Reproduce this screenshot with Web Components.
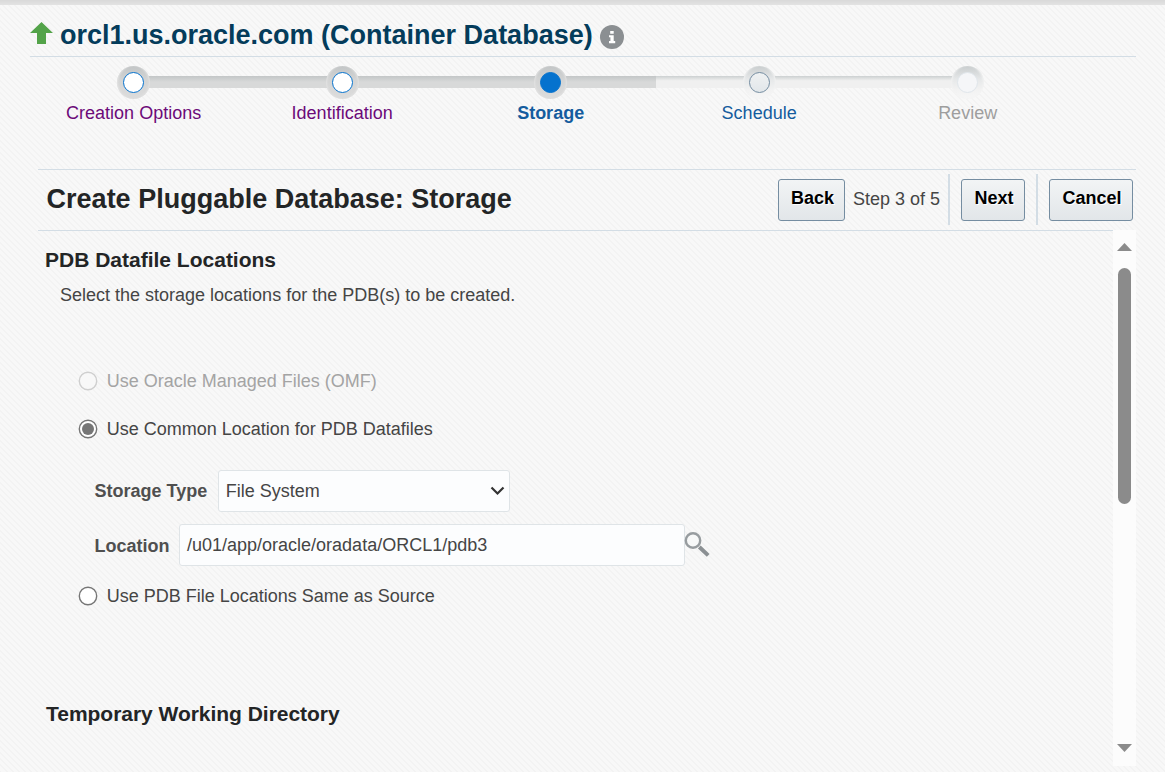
<!DOCTYPE html>
<html lang="en"><head><meta charset="utf-8"><title>Create Pluggable Database: Storage</title>
<style>html,body{margin:0;height:100%;overflow:hidden}body{font:18px/20px "Liberation Sans",Arial,sans-serif;color:#454545;background:#f6f6f6}</style></head>
<body>
<em-page></em-page>
<script>
const define=(name,html,setup)=>customElements.define(name,class extends HTMLElement{
  connectedCallback(){
    if(this.shadowRoot)return;
    const t=document.createElement('template');
    t.innerHTML='<style>*{box-sizing:border-box}</style>'+html;
    this.attachShadow({mode:'open'}).append(t.content.cloneNode(true));
    if(setup)setup(this,this.shadowRoot);
  }});

define('em-header',`<style>
:host{display:flex;box-sizing:border-box;height:52px;margin:0 29px 0 30px;border-bottom:1px solid #d3dde5;align-items:flex-start;color:#043c5b}
h1{font-size:27px;line-height:32px;margin:14px 0 0 7px;font-weight:bold;white-space:nowrap}
.up{margin-top:17px}.info{margin:20px 0 0 7px}</style>
<svg class="up" width="23" height="22" viewBox="0 0 23 22"><path d="M11.5 0L23 11H16V22H7V11H0Z" fill="#53a349"/></svg>
<h1><slot></slot></h1>
<svg class="info" width="24" height="24" viewBox="0 0 24 24"><circle cx="12" cy="12" r="12" fill="#8b8f92"/><path d="M10.2 6h3.5v2.8h-3.5zM9 10.2h4.7v5.8H15.2v2.2H9V16h1.4v-3.7H9z" fill="#fff"/></svg>`);

define('em-step',`<style>
:host{display:flex;flex-direction:column;align-items:center;width:208.5px;flex:none;position:relative;white-space:nowrap}
.ring{width:33px;height:33px;border-radius:50%;padding:6px;background:linear-gradient(#c2c5c6,#d4d5d5 45%,#dcdcdc);position:relative;z-index:1;box-shadow:inset 2px 0 2px -1px #e4e4e4,inset -2px 0 2px -1px #e4e4e4}
.dot{width:21px;height:21px;border-radius:50%;border:1px solid #0572ce;background:#fff}
.label{margin-top:4px;color:#6c0a79}
:host([state=current]) .dot{background:#0572ce}
:host([state=current]) .label{font-weight:bold;color:#145c9e}
:host([state=next]) .ring,:host([state=off]) .ring{background:linear-gradient(#c9cdce,#e6e8e9 40%,#f3f3f3 75%,#f6f6f6);box-shadow:inset 2px 0 2px -1px #f3f3f3,inset -2px 0 2px -1px #f3f3f3}
:host([state=next]) .dot{border-color:#758da1;background:linear-gradient(#eff1f2,#e2e7ea)}
:host([state=next]) .label{color:#145c9e}
:host([state=off]) .dot{border-color:#e0e6eb;background:#f5f6f8}
:host([state=off]) .label{color:#9e9e9e}
</style><div class="ring"><div class="dot"></div></div><div class="label"><slot></slot></div>`);

define('em-train',`<style>
:host{display:flex;position:relative;margin:9px 0 0 29.4px;height:103px}
.rail{position:absolute;left:103.6px;top:10px;width:834px;height:12px;background:linear-gradient(#ccd0d1,#dfe1e1 20%,#f0f0f0 40%)}
.done{width:523px;height:12px;background:linear-gradient(#c3c6c7,#d8d9d9 50%)}
</style><div class="rail"><div class="done"></div></div><slot></slot>`);

define('em-button',`<style>
:host{display:block;flex:none}
button{display:block;font:bold 18px/20px "Liberation Sans",Arial,sans-serif;color:#000;text-shadow:1px 1px 0 #fff;height:42px;width:100%;padding:0 0 4px 2px;border:1px solid #758da1;border-radius:3px;background:linear-gradient(#f2f4f5,#e2e6e9)}
</style><button><slot></slot></button>`);

define('em-toolbar',`<style>
:host{display:flex;align-items:center;height:62px;margin:0 29px 0 38px;border-top:1px solid #d3dde5;border-bottom:1px solid #d3dde5}
h2{margin:0 auto 2px 8.6px;font-size:27px;line-height:32px;color:#232526;white-space:nowrap}
i{width:2px;height:51px;margin-bottom:2px;background:#d3dde5}
.back{width:67px}.step{margin:0 8px 2px;white-space:nowrap;width:87px}.next{width:64px;margin:0 11px}.cancel{width:84px;margin:0 3px 0 11px}
</style><h2><slot></slot></h2><em-button class="back">Back</em-button><span class="step">Step 3 of 5</span><i></i><em-button class="next">Next</em-button><i></i><em-button class="cancel">Cancel</em-button>`);

define('em-radio',`<style>
:host{display:flex;align-items:center;gap:9px;height:20px;white-space:nowrap}
svg{flex:none}:host([disabled]){color:#a4a4a4}
.in{display:none}:host([checked]) .in{display:block}
:host([disabled]) .out{stroke:#cfcfcf;fill:#f8f8f8}
</style><svg width="20" height="20" viewBox="0 0 20 20"><circle class="out" cx="10" cy="10" r="8.7" fill="#fff" stroke="#767676" stroke-width="1.4"/><circle class="in" cx="10" cy="10" r="6" fill="#767676"/></svg><span><slot></slot></span>`);

define('em-field',`<style>
:host{display:flex;align-items:center;height:42px;white-space:nowrap}
b{color:#4f4f4f;position:relative;top:var(--drop,0)}
.box{display:flex;align-items:center;justify-content:space-between;height:42px;border:1px solid #dfe4e7;border-radius:3px;background:#fcfdfe;padding:0 4px 0 7px;margin-left:var(--gap,10px);width:var(--w)}
</style><b></b><div class="box"><slot></slot><slot name="icon"></slot></div><slot name="after"></slot>`,(h,r)=>{r.querySelector('b').textContent=h.getAttribute('label')});

define('em-scrollbar',`<style>
:host{display:flex;flex-direction:column;align-items:center;width:23px;height:536px;background:#fcfcfc;flex:none;margin-top:-1px}
.thumb{width:13px;height:236px;border-radius:7px;background:#8b8b8b;margin:17px 0 auto}
svg{margin-top:13px;display:block}.down{margin:0 0 14px}
</style><svg width="15" height="8"><path d="M0 8L7.5 0L15 8Z" fill="#8b8b8b"/></svg><div class="thumb"></div><svg class="down" width="15" height="8"><path d="M0 0L7.5 8L15 0Z" fill="#8b8b8b"/></svg>`);

define('em-content',`<style>
:host{display:flex;margin:0 29px 0 38px;height:540px}
main{flex:1}
h3{margin:17px 0 0 7px;font-size:21px;line-height:24px;color:#232526}
p{margin:13px 0 0 22px}
.r1{margin:66px 0 0 39.7px}.r2{margin:28px 0 0 39.7px}.r3{margin:20px 0 0 39.7px}
.f1{margin:31px 0 0 56.5px;--w:292px;--gap:10.5px}
.f2{margin:12px 0 0 56.5px;--w:506px;--gap:9.5px;--drop:1px}
.lens{margin:0 0 1px -1px}
h3.tmp{margin:96px 0 0 8px;letter-spacing:-.03px}
</style><main>
<h3>PDB Datafile Locations</h3>
<p>Select the storage locations for the PDB(s) to be created.</p>
<em-radio class="r1" disabled>Use Oracle Managed Files (OMF)</em-radio>
<em-radio class="r2" checked>Use Common Location for PDB Datafiles</em-radio>
<em-field class="f1" label="Storage Type">File System<svg slot="icon" width="15" height="10" viewBox="0 0 15 10"><path d="M1.5 1.5L7.5 7.5L13.5 1.5" fill="none" stroke="#333" stroke-width="2.2"/></svg></em-field>
<em-field class="f2" label="Location">/u01/app/oracle/oradata/ORCL1/pdb3<svg class="lens" slot="after" width="26" height="25" viewBox="0 0 26 25"><circle cx="9" cy="8.5" r="7.2" fill="#f7f8f8" stroke="#979c9f" stroke-width="2.4"/><path d="M15.3 15L24.2 23.4" stroke="#8b9093" stroke-width="4"/></svg></em-field>
<em-radio class="r3">Use PDB File Locations Same as Source</em-radio>
<h3 class="tmp">Temporary Working Directory</h3>
</main><em-scrollbar></em-scrollbar>`);

define('em-page',`<style>
:host{display:block;height:100vh;background:repeating-linear-gradient(45deg,#f3f3f3 0 1.414px,#f8f8f8 1.414px 4.243px)}
.top{height:5px;background:linear-gradient(#d9d9d9,#e3e3e3)}
</style><div class="top"></div>
<em-header>orcl1.us.oracle.com (Container Database)</em-header>
<em-train><em-step>Creation Options</em-step><em-step>Identification</em-step><em-step state="current">Storage</em-step><em-step state="next">Schedule</em-step><em-step state="off">Review</em-step></em-train>
<em-toolbar>Create Pluggable Database: Storage</em-toolbar>
<em-content></em-content>`);
</script></body></html>
